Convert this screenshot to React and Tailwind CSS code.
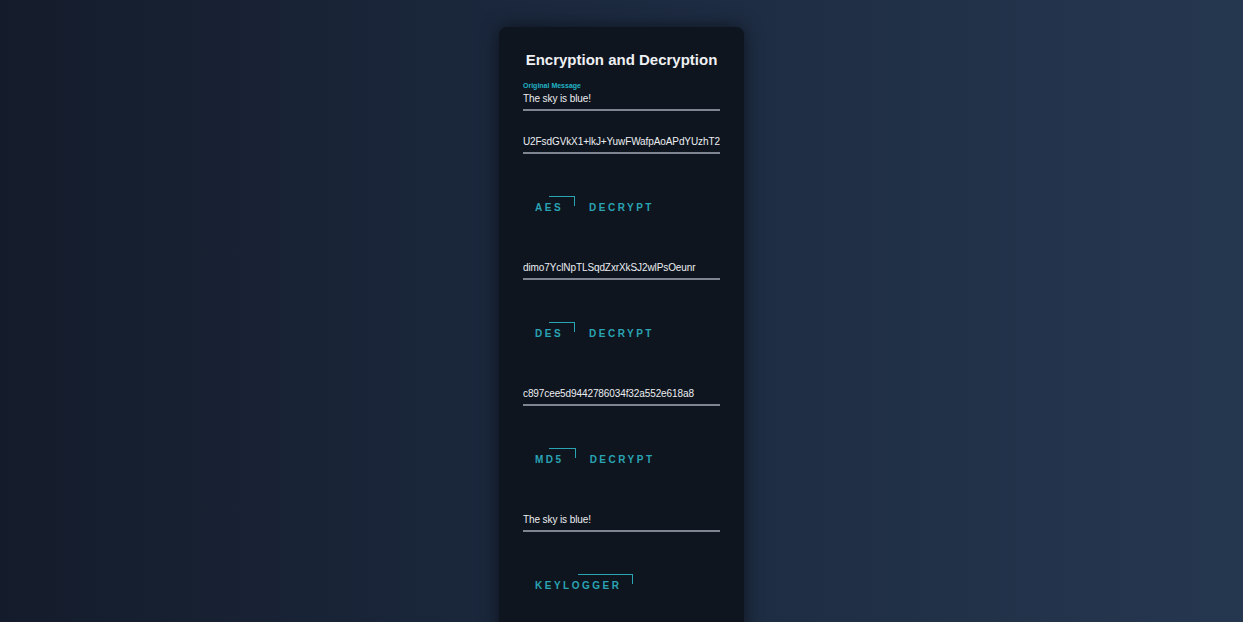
import React from "react";

const font = { fontFamily: '"Liberation Sans", Arial, sans-serif' };

function Field({ label, value }) {
  return (
    <div className="flex flex-col">
      {label && (
        <div className="text-[7px] leading-[9px] font-bold text-[#22b3c4] mb-[2px]">{label}</div>
      )}
      <div className="overflow-hidden whitespace-nowrap text-[10px] leading-[13px] tracking-[-0.1px] text-[#eceef1] pb-[4px] border-b-2 border-[#7f8590]">
        {value}
      </div>
    </div>
  );
}

function NeonButton({ children, lines }) {
  return (
    <div className="relative flex items-center h-6 px-3 text-[10px] leading-[12px] font-bold tracking-[2.5px] text-[#2aa3b3]">
      {lines && (
        <>
          <span className="absolute top-0 left-1/2 right-0 h-px bg-[#2aa3b3]" />
          <span className="absolute top-0 right-0 w-px h-[40%] bg-[#2aa3b3]" />
        </>
      )}
      {children}
    </div>
  );
}

function ButtonRow({ children }) {
  return <div className="flex gap-[2px] mt-[42px] mb-[41px]">{children}</div>;
}

export default function App() {
  return (
    <div
      className="w-full h-[622px] overflow-hidden bg-gradient-to-r from-[#141c2b] via-[#1c2a40] to-[#25374f] flex justify-center"
      style={font}
    >
      <div className="mt-[27px] w-[245px] h-[640px] shrink-0 rounded-lg bg-[#0e151f] shadow-[0_0_18px_rgba(0,0,0,0.55)] pt-6 px-6 flex flex-col">
        <h1 className="text-[15px] leading-[18px] font-bold text-[#eef0f3] text-center mb-3">
          Encryption and Decryption
        </h1>
        <Field label="Original Message" value="The sky is blue!" />
        <div className="mt-[24px]">
          <Field value="U2FsdGVkX1+lkJ+YuwFWafpAoAPdYUzhT2" />
        </div>
        <ButtonRow>
          <NeonButton lines>AES</NeonButton>
          <NeonButton>DECRYPT</NeonButton>
        </ButtonRow>
        <Field value="dimo7YclNpTLSqdZxrXkSJ2wlPsOeunr" />
        <ButtonRow>
          <NeonButton lines>DES</NeonButton>
          <NeonButton>DECRYPT</NeonButton>
        </ButtonRow>
        <Field value="c897cee5d9442786034f32a552e618a8" />
        <ButtonRow>
          <NeonButton lines>MD5</NeonButton>
          <NeonButton>DECRYPT</NeonButton>
        </ButtonRow>
        <Field value="The sky is blue!" />
        <ButtonRow>
          <NeonButton lines>KEYLOGGER</NeonButton>
        </ButtonRow>
      </div>
    </div>
  );
}
